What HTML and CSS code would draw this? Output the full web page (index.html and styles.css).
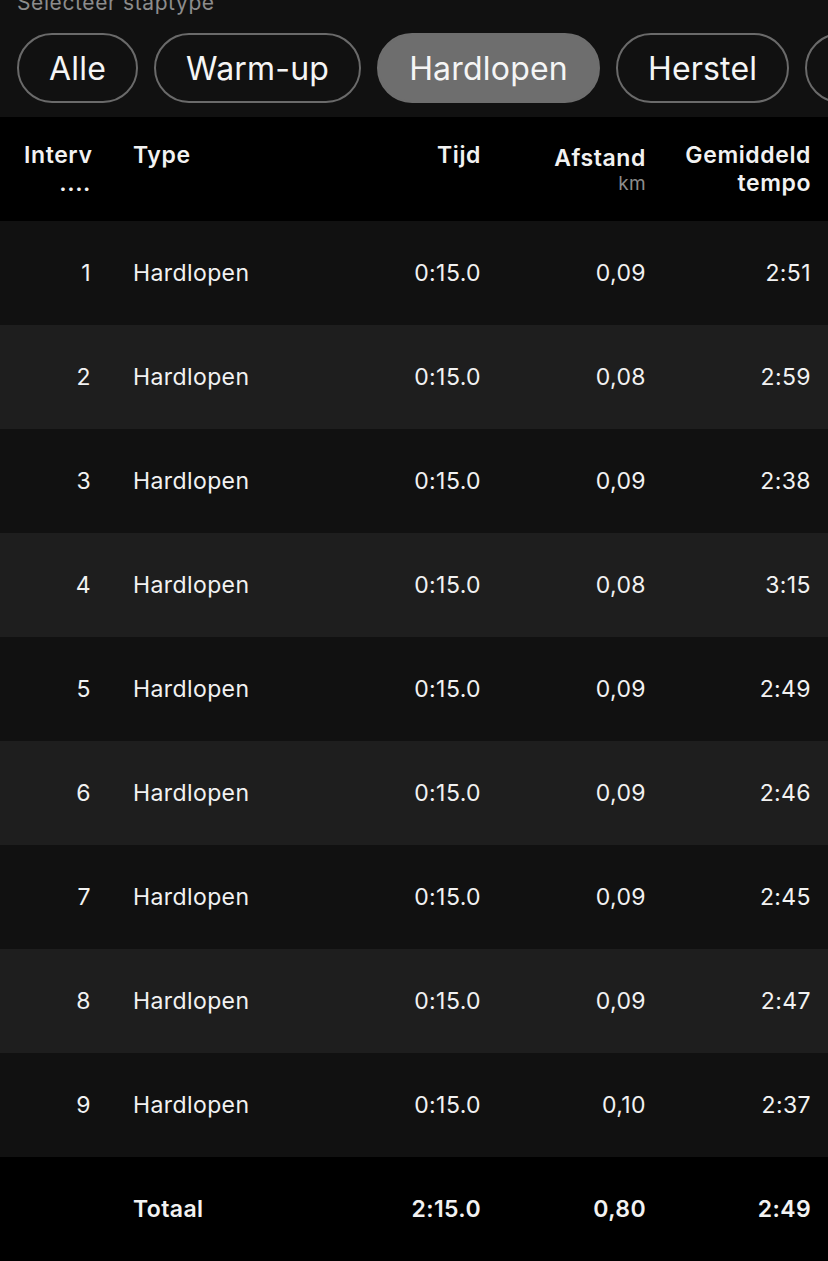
FILE: index.html
```html
<!DOCTYPE html>
<html lang="nl">
<head>
    <meta charset="UTF-8">
    <meta name="viewport" content="width=device-width, initial-scale=1.0">
    <title>Intervallen</title>
    <link rel="stylesheet" href="styles.css">
</head>
<body>

    <div class="filter">
        <p class="filter-title">Selecteer staptype</p>
        <div class="pills">
            <button class="pill">Alle</button>
            <button class="pill">Warm-up</button>
            <button class="pill active">Hardlopen</button>
            <button class="pill">Herstel</button>
            <button class="pill">Afkoelen</button>
        </div>
    </div>

    <div class="table">
        <div class="row head">
            <div class="cell num">Interv<br>....</div>
            <div class="cell type">Type</div>
            <div class="cell">Tijd</div>
            <div class="cell dist">Afstand<span class="unit">km</span></div>
            <div class="cell">Gemiddeld<br>tempo</div>
        </div>
        <div class="row"><div class="cell num">1</div><div class="cell type">Hardlopen</div><div class="cell">0:15.0</div><div class="cell">0,09</div><div class="cell">2:51</div></div>
        <div class="row"><div class="cell num">2</div><div class="cell type">Hardlopen</div><div class="cell">0:15.0</div><div class="cell">0,08</div><div class="cell">2:59</div></div>
        <div class="row"><div class="cell num">3</div><div class="cell type">Hardlopen</div><div class="cell">0:15.0</div><div class="cell">0,09</div><div class="cell">2:38</div></div>
        <div class="row"><div class="cell num">4</div><div class="cell type">Hardlopen</div><div class="cell">0:15.0</div><div class="cell">0,08</div><div class="cell">3:15</div></div>
        <div class="row"><div class="cell num">5</div><div class="cell type">Hardlopen</div><div class="cell">0:15.0</div><div class="cell">0,09</div><div class="cell">2:49</div></div>
        <div class="row"><div class="cell num">6</div><div class="cell type">Hardlopen</div><div class="cell">0:15.0</div><div class="cell">0,09</div><div class="cell">2:46</div></div>
        <div class="row"><div class="cell num">7</div><div class="cell type">Hardlopen</div><div class="cell">0:15.0</div><div class="cell">0,09</div><div class="cell">2:45</div></div>
        <div class="row"><div class="cell num">8</div><div class="cell type">Hardlopen</div><div class="cell">0:15.0</div><div class="cell">0,09</div><div class="cell">2:47</div></div>
        <div class="row"><div class="cell num">9</div><div class="cell type">Hardlopen</div><div class="cell">0:15.0</div><div class="cell">0,10</div><div class="cell">2:37</div></div>
        <div class="row total">
            <div class="cell num"></div>
            <div class="cell type">Totaal</div>
            <div class="cell">2:15.0</div>
            <div class="cell">0,80</div>
            <div class="cell">2:49</div>
        </div>
    </div>

</body>
</html>
```

FILE: styles.css
```css
body {
    margin: 0;
    background: #000;
    color: #f2f2f2;
    font-family: Inter, "Noto Sans", sans-serif;
    overflow: hidden;
}
.filter {
    background: #111;
    height: 117px;
    overflow: hidden;
}
.filter-title {
    margin: -9px 0 0 17px;
    font-size: 21px;
    line-height: 24px;
    letter-spacing: 0.6px;
    color: #8c8c8c;
}
.pills {
    display: flex;
    gap: 16px;
    padding: 18px 17px 0;
    white-space: nowrap;
}
.pill {
    flex: none;
    height: 70px;
    padding: 0 30px;
    border: 2px solid #6a6a6a;
    border-radius: 35px;
    background: transparent;
    color: #f5f5f5;
    font-family: Inter, "Noto Sans", sans-serif;
    font-size: 32px;
    letter-spacing: 0.2px;
}
.pill.active {
    background: #6e6e6e;
    border-color: #6e6e6e;
}
.row {
    display: grid;
    grid-template-columns: 67px 1fr 150px 165px 165px;
    align-items: center;
    height: 104px;
    padding: 0 17px 0 24px;
    font-size: 23px;
    letter-spacing: 0.4px;
    background: #111;
}
.row:nth-child(odd) {
    background: #1e1e1e;
}
.cell {
    text-align: right;
}
.cell.type {
    text-align: left;
    padding-left: 42px;
}
.row.head {
    background: #000;
    align-items: start;
    padding-top: 24px;
    height: 80px;
    font-size: 23px;
    font-weight: 600;
    line-height: 28px;
    letter-spacing: 0.6px;
}
.head .dist {
    padding-top: 3px;
}
.unit {
    display: block;
    font-size: 19px;
    font-weight: 400;
    line-height: 24px;
    letter-spacing: 0.3px;
    color: #8c8c8c;
}
.row.total {
    background: #000;
    font-weight: 600;
}
```
